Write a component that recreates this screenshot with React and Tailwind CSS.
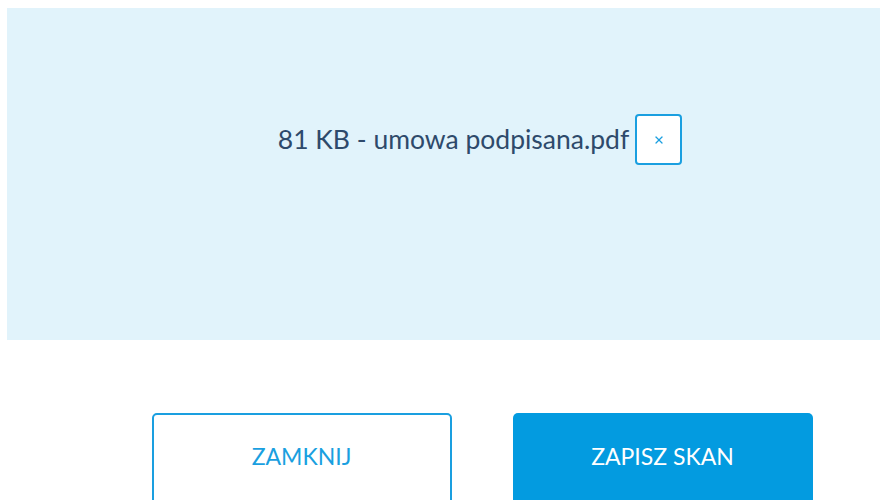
import { X } from "lucide-react";

export default function App() {
  return (
    <div
      className="w-[880px] h-[500px] overflow-hidden bg-white"
      style={{ fontFamily: '"Lato", "Open Sans", sans-serif' }}
    >
      <div className="w-[957px] pl-[7px] pt-[8px]">
        {/* drop zone with the attached file */}
        <div className="h-[332px] bg-[#e1f3fb] flex items-start justify-center pt-[106px]">
          <div className="flex items-center gap-[6px] -ml-[4px]">
            <span className="text-[26.5px] text-[#2e4a6b]">81 KB - umowa podpisana.pdf</span>
            <button className="w-[47px] h-[51px] border-2 border-[#1a9fe0] rounded-[4px] bg-white flex items-center justify-center">
              <X size={12} strokeWidth={2.5} className="text-[#1a9fe0]" />
            </button>
          </div>
        </div>

        <div className="flex justify-center gap-[61px] pt-[73px]">
          <button className="w-[300px] h-[92px] border-2 border-[#1a9fe0] rounded-[5px] bg-white text-[#1a9fe0] text-[23px] flex justify-center pt-[24px]">
            ZAMKNIJ
          </button>
          <button className="w-[300px] h-[92px] rounded-[5px] bg-[#039be0] text-white text-[23px] flex justify-center pt-[26px]">
            ZAPISZ SKAN
          </button>
        </div>
      </div>
    </div>
  );
}
